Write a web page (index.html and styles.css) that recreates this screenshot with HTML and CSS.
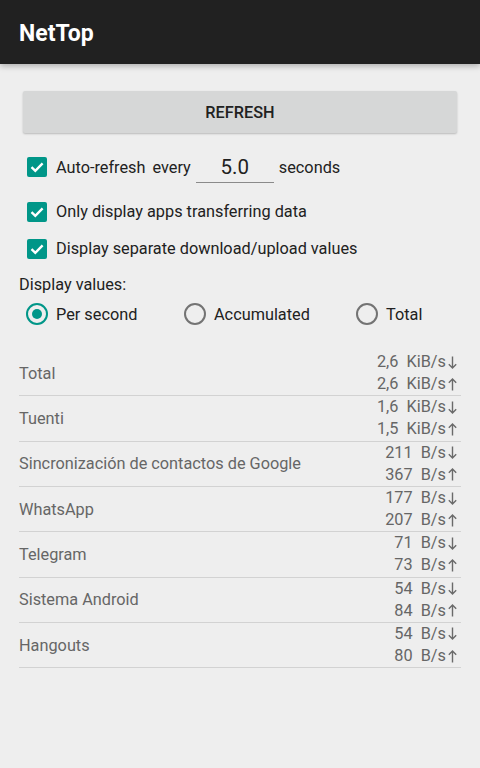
FILE: index.html
```html
<!DOCTYPE html>
<html>
<head>
<meta charset="utf-8">
<link rel="stylesheet" href="styles.css">
</head>
<body>
<div class="appbar"><span class="title">NetTop</span></div>
<main class="content">
  <div class="button">REFRESH</div>
  <div class="auto-row">
    <span class="checkbox"><svg viewBox="0 0 20 20" width="20" height="20"><path d="M4.5 10.2 L8.3 13.8 L15.6 6.4" fill="none" stroke="#fff" stroke-width="2.4"/></svg></span>
    <span class="txt">Auto-refresh</span>
    <span class="txt every">every</span>
    <span class="edit">5.0</span>
    <span class="txt">seconds</span>
  </div>
  <div class="check-row first">
    <span class="checkbox"><svg viewBox="0 0 20 20" width="20" height="20"><path d="M4.5 10.2 L8.3 13.8 L15.6 6.4" fill="none" stroke="#fff" stroke-width="2.4"/></svg></span>
    <span class="txt">Only display apps transferring data</span>
  </div>
  <div class="check-row">
    <span class="checkbox"><svg viewBox="0 0 20 20" width="20" height="20"><path d="M4.5 10.2 L8.3 13.8 L15.6 6.4" fill="none" stroke="#fff" stroke-width="2.4"/></svg></span>
    <span class="txt">Display separate download/upload values</span>
  </div>
  <div class="label">Display values:</div>
  <div class="radios">
    <div class="radio-item"><span class="radio on"></span><span class="txt">Per second</span></div>
    <div class="radio-item"><span class="radio"></span><span class="txt">Accumulated</span></div>
    <div class="radio-item"><span class="radio"></span><span class="txt">Total</span></div>
  </div>
  <div class="table">
    <div class="row"><span class="name">Total</span><span class="vals"><span class="v">2,6  KiB/s<svg class="arr" viewBox="0 0 9 13"><path d="M4.5 0.5V12M0.8 8.3L4.5 12L8.2 8.3"/></svg></span><span class="v">2,6  KiB/s<svg class="arr" viewBox="0 0 9 13"><path d="M4.5 12.5V1M0.8 4.7L4.5 1L8.2 4.7"/></svg></span></span></div>
    <div class="row"><span class="name">Tuenti</span><span class="vals"><span class="v">1,6  KiB/s<svg class="arr" viewBox="0 0 9 13"><path d="M4.5 0.5V12M0.8 8.3L4.5 12L8.2 8.3"/></svg></span><span class="v">1,5  KiB/s<svg class="arr" viewBox="0 0 9 13"><path d="M4.5 12.5V1M0.8 4.7L4.5 1L8.2 4.7"/></svg></span></span></div>
    <div class="row"><span class="name">Sincronización de contactos de Google</span><span class="vals"><span class="v">211  B/s<svg class="arr" viewBox="0 0 9 13"><path d="M4.5 0.5V12M0.8 8.3L4.5 12L8.2 8.3"/></svg></span><span class="v">367  B/s<svg class="arr" viewBox="0 0 9 13"><path d="M4.5 12.5V1M0.8 4.7L4.5 1L8.2 4.7"/></svg></span></span></div>
    <div class="row"><span class="name">WhatsApp</span><span class="vals"><span class="v">177  B/s<svg class="arr" viewBox="0 0 9 13"><path d="M4.5 0.5V12M0.8 8.3L4.5 12L8.2 8.3"/></svg></span><span class="v">207  B/s<svg class="arr" viewBox="0 0 9 13"><path d="M4.5 12.5V1M0.8 4.7L4.5 1L8.2 4.7"/></svg></span></span></div>
    <div class="row"><span class="name">Telegram</span><span class="vals"><span class="v">71  B/s<svg class="arr" viewBox="0 0 9 13"><path d="M4.5 0.5V12M0.8 8.3L4.5 12L8.2 8.3"/></svg></span><span class="v">73  B/s<svg class="arr" viewBox="0 0 9 13"><path d="M4.5 12.5V1M0.8 4.7L4.5 1L8.2 4.7"/></svg></span></span></div>
    <div class="row"><span class="name">Sistema Android</span><span class="vals"><span class="v">54  B/s<svg class="arr" viewBox="0 0 9 13"><path d="M4.5 0.5V12M0.8 8.3L4.5 12L8.2 8.3"/></svg></span><span class="v">84  B/s<svg class="arr" viewBox="0 0 9 13"><path d="M4.5 12.5V1M0.8 4.7L4.5 1L8.2 4.7"/></svg></span></span></div>
    <div class="row"><span class="name">Hangouts</span><span class="vals"><span class="v">54  B/s<svg class="arr" viewBox="0 0 9 13"><path d="M4.5 0.5V12M0.8 8.3L4.5 12L8.2 8.3"/></svg></span><span class="v">80  B/s<svg class="arr" viewBox="0 0 9 13"><path d="M4.5 12.5V1M0.8 4.7L4.5 1L8.2 4.7"/></svg></span></span></div>
  </div>
</main>
</body>
</html>
```
FILE: styles.css
```css
html, body {
  margin: 0;
  padding: 0;
}
body {
  background: #eeeeee;
  font-family: Roboto, "Noto Sans", sans-serif;
  color: #212121;
  width: 480px;
  height: 768px;
  overflow: hidden;
}
.appbar {
  height: 64px;
  box-sizing: border-box;
  padding-top: 3px;
  background: #212121;
  display: flex;
  align-items: center;
  padding-left: 19px;
  box-shadow: 0 2px 6px rgba(0,0,0,0.28);
  position: relative;
  z-index: 1;
}
.title {
  color: #ffffff;
  font-size: 23px;
  font-weight: 700;
}
.content {
  padding: 0 19px;
  display: flex;
  flex-direction: column;
}
.button {
  margin: 27px 4px 0;
  height: 42px;
  background: #d6d7d7;
  border-radius: 2px;
  box-shadow: 0 1px 2px rgba(0,0,0,0.22);
  display: flex;
  align-items: center;
  justify-content: center;
  font-size: 16.3px;
  font-weight: 500;
  color: #212121;
}
.txt {
  font-size: 16.3px;
  color: #212121;
}
.checkbox {
  width: 20px;
  height: 20px;
  background: #009688;
  border-radius: 2px;
  margin-left: 8px;
  margin-right: 9px;
  display: flex;
  flex: none;
}
.auto-row {
  margin-top: 12px;
  height: 44px;
  display: flex;
  align-items: center;
}
.every {
  margin-left: 7px;
}
.edit {
  margin-left: 5px;
  margin-right: 5px;
  width: 78px;
  height: 30px;
  box-sizing: border-box;
  border-bottom: 1px solid #8a8a8a;
  font-size: 20.5px;
  color: #212121;
  text-align: center;
  line-height: 28px;
  position: relative;
  top: 1px;
}
.check-row {
  height: 37px;
  display: flex;
  align-items: center;
}
.check-row.first {
  margin-top: 4px;
}
.label {
  margin-top: 9px;
  height: 18px;
  line-height: 18px;
  font-size: 16.3px;
}
.radios {
  margin-top: 8px;
  height: 24px;
  display: grid;
  grid-template-columns: 158px 172px auto;
  padding-left: 7px;
}
.radio-item {
  display: flex;
  align-items: center;
}
.radio {
  width: 22px;
  height: 22px;
  box-sizing: border-box;
  border: 2px solid #737373;
  border-radius: 50%;
  margin-right: 8px;
  position: relative;
  flex: none;
}
.radio.on {
  border-color: #009688;
}
.radio.on::after {
  content: "";
  position: absolute;
  left: 4px;
  top: 4px;
  width: 10px;
  height: 10px;
  border-radius: 50%;
  background: #009688;
}
.table {
  margin-top: 25px;
}
.row {
  display: flex;
  align-items: center;
  justify-content: space-between;
  border-bottom: 1px solid #d2d2d2;
  color: #666666;
  font-size: 16.3px;
}
.name {
  color: #666666;
}
.vals {
  display: flex;
  flex-direction: column;
  align-items: flex-end;
  line-height: 22.16px;
  padding-right: 4px;
}
.v {
  white-space: pre;
  display: flex;
  align-items: center;
}
.arr {
  width: 9px;
  height: 13px;
  margin-left: 2px;
  fill: none;
  stroke: #6a6a6a;
  stroke-width: 1.4;
}
```
